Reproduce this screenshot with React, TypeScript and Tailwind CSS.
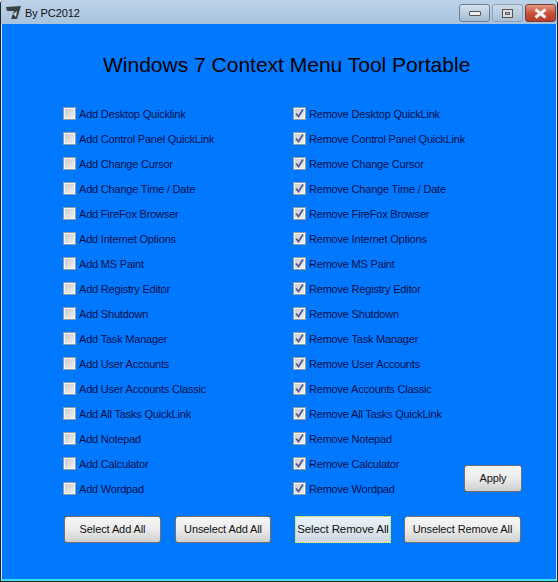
const addItems = ["Add Desktop Quicklink","Add Control Panel QuickLink","Add Change Cursor","Add Change Time / Date","Add FireFox Browser","Add Internet Options","Add MS Paint","Add Registry Editor","Add Shutdown","Add Task Manager","Add User Accounts","Add User Accounts Classic","Add All Tasks QuickLink","Add Notepad","Add Calculator","Add Wordpad"];
const removeItems = ["Remove Desktop QuickLink","Remove Control Panel QuickLink","Remove Change Cursor","Remove Change Time / Date","Remove FireFox Browser","Remove Internet Options","Remove MS Paint","Remove Registry Editor","Remove Shutdown","Remove Task Manager","Remove User Accounts","Remove Accounts Classic","Remove All Tasks QuickLink","Remove Notepad","Remove Calculator","Remove Wordpad"];

function Check({ label, checked }: { label: string; checked: boolean }) {
  return (
    <div className="flex h-[25px] items-center">
      <div className="flex h-[13px] w-[13px] items-center justify-center border border-[#8e9ba8] bg-gradient-to-br from-[#c8c8c8] to-[#f2f2f2] shadow-[inset_0_0_0_1px_#f4f4f4]">
        {checked && (
          <svg width="11" height="11" viewBox="0 0 11 11">
            <path d="M2 5.5 L4.5 8.5 L9 1.5" fill="none" stroke="#4a5a9a" strokeWidth="1.7" />
          </svg>
        )}
      </div>
      <span className="ml-[3px] whitespace-nowrap pt-[2px] text-[11px] leading-none tracking-[-0.2px] text-[#00104a]">{label}</span>
    </div>
  );
}

function Btn({ label, w, className = "" }: { label: string; w: string; className?: string }) {
  return (
    <div className={`flex h-[27px] items-center justify-center rounded-[3px] border border-[#707070] bg-gradient-to-b from-[#f6f6f6] via-[#ebebeb] to-[#cfcfcf] text-[11px] leading-none tracking-[-0.1px] text-[#111] ${w} ${className}`}>
      {label}
    </div>
  );
}

export default function App() {
  return (
    <div className="flex h-[582px] w-[558px] flex-col overflow-hidden rounded-t-[4px] border-x border-b border-[#1a2530] bg-[#b9d1e8] font-['Liberation_Sans',sans-serif]">
      <div className="flex h-[24px] shrink-0 items-center bg-gradient-to-b from-[#bcd2e8] to-[#a9c3dd] pl-[5px] pr-[1px]">
        <svg className="mt-[2px]" width="16" height="14" viewBox="0 0 16 14">
          <path d="M0 1 L15 0 L11 13 L5 13 L8 5 L1 5 Z" fill="#3a3f44" />
          <path d="M7 8 L11 5 L10 11 Z" fill="#c8d4de" />
        </svg>
        <span className="ml-[3px] pt-[3px] text-[11px] leading-none tracking-[-0.1px] text-[#111]">By PC2012</span>
        <div className="ml-auto mt-[4px] flex h-[18px] items-stretch gap-[2px] self-start">
          <div className="flex w-[31px] items-center justify-center rounded-[3px] border border-[#6d7f93] bg-gradient-to-b from-[#d6e3ef] to-[#a4bad0]">
            <div className="h-[5px] w-[12px] rounded-[1px] border border-[#555] bg-[#eee]" />
          </div>
          <div className="flex w-[31px] items-center justify-center rounded-[3px] border border-[#8ea3b8] bg-gradient-to-b from-[#ccdcea] to-[#a9bfd5]">
            <div className="flex h-[9px] w-[11px] items-center justify-center border border-[#555] bg-[#ddd]"><div className="h-[3px] w-[5px] border border-[#666] bg-[#aab]" /></div>
          </div>
          <div className="flex w-[31px] items-center justify-center rounded-[3px] border border-[#7a3a30] bg-gradient-to-b from-[#e29a88] via-[#c9503a] to-[#b33d28]">
            <svg width="15" height="11" viewBox="0 0 15 11"><path d="M2.5 1.5 L12.5 9.5 M12.5 1.5 L2.5 9.5" stroke="#f2f2f2" strokeWidth="3" /></svg>
          </div>
        </div>
      </div>
      <div className="flex min-h-0 flex-1 flex-col border-x border-b-2 border-x-[#cfe9f5] border-b-[#40e0f0] bg-[#0078ff] pl-[61px]">
        <h1 className="mt-[29px] ml-[40px] h-[24px] whitespace-nowrap text-[21px] font-normal leading-[24px] text-black">Windows 7 Context Menu Tool Portable</h1>
        <div className="mt-[24px] flex">
          <div className="flex w-[230px] flex-col">
            {addItems.map((t) => <Check key={t} label={t} checked={false} />)}
          </div>
          <div className="flex w-[171px] flex-col">
            {removeItems.map((t) => <Check key={t} label={t} checked />)}
          </div>
          <div className="flex flex-col justify-end pb-[9px]">
            <Btn label="Apply" w="w-[58px]" />
          </div>
        </div>
        <div className="mt-[15px] ml-[1px] flex">
          <Btn label="Select Add All" w="w-[97px]" />
          <Btn label="Unselect Add All" w="w-[96px]" className="ml-[14px]" />
          <div className="ml-[24px] flex h-[27px] w-[96px] items-center justify-center border border-dotted border-[#b4e020] bg-gradient-to-b from-[#eaf4fa] to-[#cfd8e0] text-[11.5px] leading-none tracking-[-0.1px] text-[#111]">Select Remove All</div>
          <Btn label="Unselect Remove All" w="w-[117px]" className="ml-[13px]" />
        </div>
      </div>
    </div>
  );
}
